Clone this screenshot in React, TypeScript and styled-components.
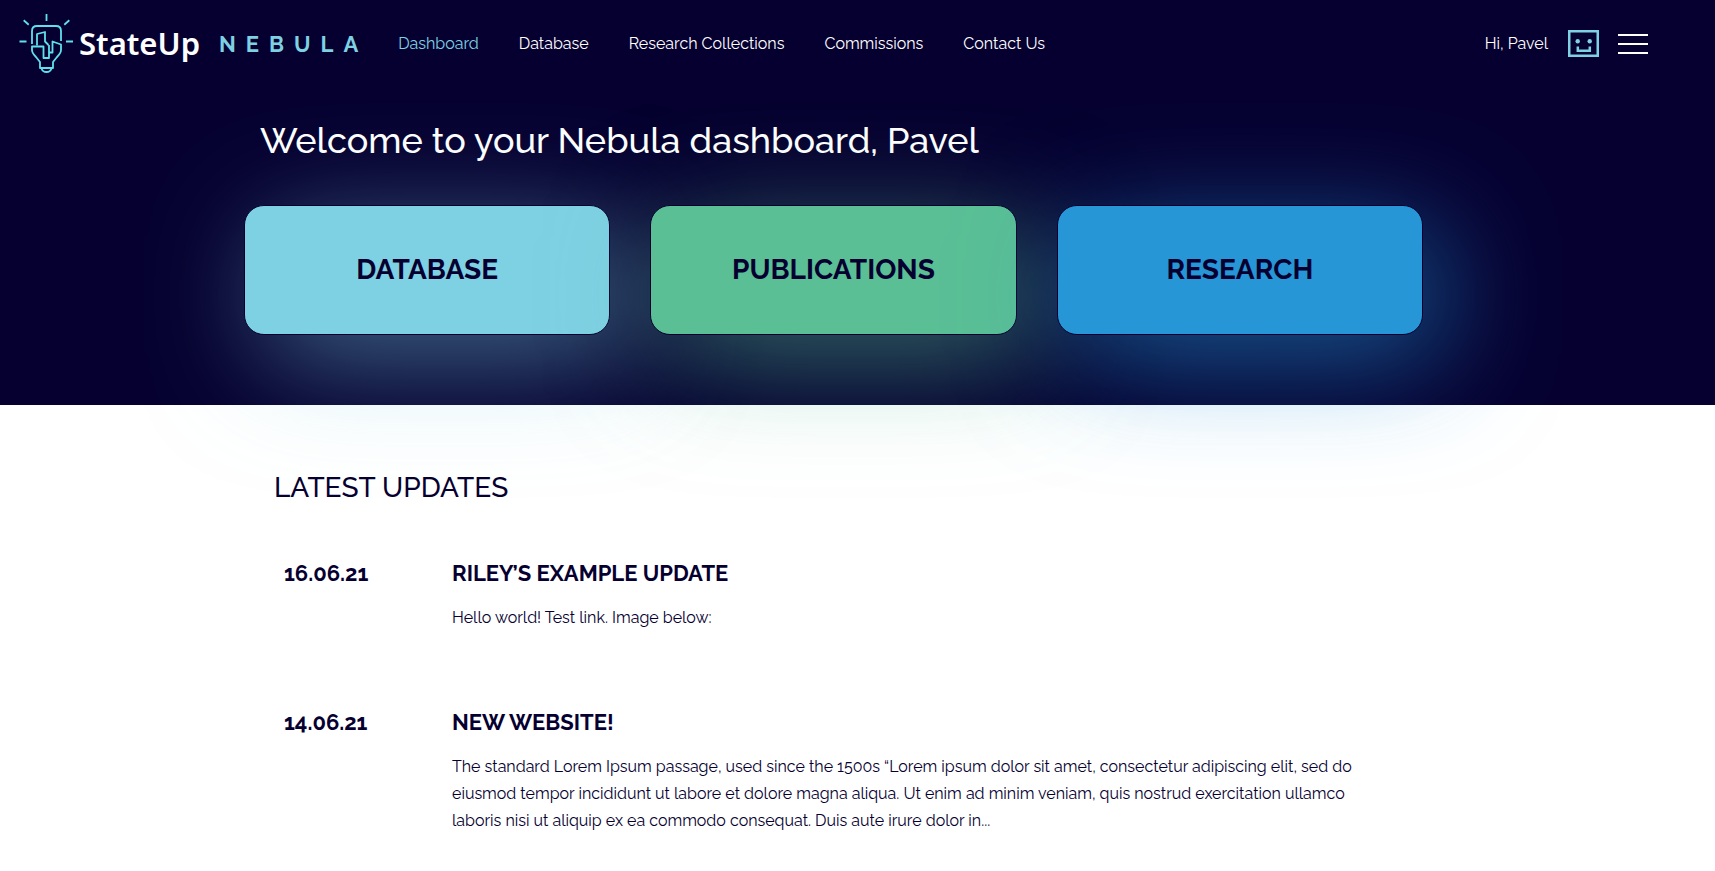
import React from "react";
import styled, { createGlobalStyle } from "styled-components";

const navy = "#060030";
const aqua = "#7ed1e3";

const GlobalStyle = createGlobalStyle`
  *, *::before, *::after { box-sizing: border-box; }
  body {
    margin: 0;
    background: #fff;
    color: ${navy};
    font-family: Raleway, Lato, "Open Sans", sans-serif;
    font-size: 16px;
    line-height: 27px;
  }
  h1, h2, h3, p, ul { margin: 0; padding: 0; }
`;

const Hero = styled.div`
  background: ${navy};
  color: #fff;
  padding-bottom: 70px;
`;

const Header = styled.header`
  display: flex;
  align-items: center;
  height: 88px;
  padding: 0 67px 0 19px;
`;

const Brand = styled.a`
  display: flex;
  align-items: center;
  color: #fff;
  text-decoration: none;
`;

const Wordmark = styled.span`
  margin-left: 5px;
  padding-bottom: 2px;
  font-family: "Noto Sans", "Open Sans", sans-serif;
  font-size: 31px;
  font-weight: 600;
  line-height: 40px;
`;

const Product = styled.span`
  margin-left: 19px;
  color: ${aqua};
  font-size: 22px;
  font-weight: 700;
  letter-spacing: 10px;
`;

const Nav = styled.nav`
  display: flex;
  gap: 40px;
  margin-left: 30px;
  padding-bottom: 2px;
`;

const NavLink = styled.a<{ $active?: boolean }>`
  color: ${(p) => (p.$active ? aqua : "#fff")};
  text-decoration: none;
  white-space: nowrap;
`;

const Account = styled.div`
  display: flex;
  align-items: center;
  gap: 19px;
  margin-left: auto;
`;

const Profile = styled.div`
  display: flex;
  align-items: center;
  gap: 20px;
  padding-bottom: 2px;
`;

const IconButton = styled.button`
  display: flex;
  padding: 0;
  border: 0;
  background: none;
  color: ${aqua};
  cursor: pointer;
`;

const Content = styled.div`
  max-width: 1227px;
  margin: 0 auto;
  padding-right: 48px;
`;

const Welcome = styled.h1`
  padding: 30px 16px 0;
  font-size: 36px;
  font-weight: 500;
  line-height: 44px;
`;

const Cards = styled.div`
  display: grid;
  grid-template-columns: repeat(3, 1fr);
  gap: 40px;
  margin-top: 43px;
`;

const Card = styled.a<{ $fill: string; $glow: string }>`
  display: flex;
  align-items: center;
  justify-content: center;
  height: 130px;
  padding-bottom: 2px;
  border: 1px solid ${navy};
  border-radius: 20px;
  background: ${(p) => p.$fill};
  box-shadow: 20px 25px 115px ${(p) => p.$glow};
  color: ${navy};
  font-size: 28px;
  font-weight: 700;
  text-decoration: none;
`;

const Updates = styled.main`
  position: relative;
  padding: 63px 30px 40px;
`;

const SectionTitle = styled.h2`
  font-size: 28px;
  font-weight: 500;
  line-height: 40px;
`;

const Update = styled.article`
  display: grid;
  grid-template-columns: 168px minmax(0, 910px);
  padding: 50px 0 0 10px;

  & + & { padding-top: 76px; }
`;

const UpdateDate = styled.time`
  font-size: 22px;
  font-weight: 700;
  line-height: 30px;
`;

const UpdateTitle = styled.h3`
  font-size: 22px;
  font-weight: 700;
  line-height: 30px;
`;

const UpdateText = styled.p`
  margin-top: 16px;
`;

const BulbLogo = () => (
  <svg width="55" height="60" viewBox="0 0 55 60" fill="none" stroke="#5fe0ee" strokeWidth="1.800" strokeLinejoin="round" aria-hidden="true">
    <path d="M27.500 0v7M4.700 6.300l5 4.400M50.300 6.300l-5 4.400M.500 27.500h7M47 27.500h7" />
    <path d="M13 30V17q0-5 5-5h19q5 0 5 5v10" />
    <path d="M18 31.500V20l8-2v9.500l3.500 3.500" />
    <path d="M30 31v13h-5.500V32.500H13V36q0 3 4 7l4 5v6h13v-6l4-5q4-4 4-7v-5.500l-8.500-3v11H30" />
    <path d="M22.500 54.500q1 3.500 5 3.500t5-3.500" />
  </svg>
);

const FaceIcon = () => (
  <svg width="31" height="27" viewBox="0 0 31 27" fill="none" stroke="currentColor" strokeWidth="2.500" aria-hidden="true">
    <rect x="1.250" y="1.250" width="28.500" height="24.500" />
    <circle cx="9.700" cy="11.300" r="2.200" fill="currentColor" stroke="none" />
    <circle cx="21.700" cy="11.300" r="2.200" fill="currentColor" stroke="none" />
    <path d="M9.800 16.500v4.200h12v-4.200" />
  </svg>
);

const MenuIcon = () => (
  <svg width="30" height="20" viewBox="0 0 30 20" stroke="#fff" strokeWidth="2" aria-hidden="true">
    <path d="M0 1h30M0 10h30M0 19h30" />
  </svg>
);

const links = ["Dashboard", "Database", "Research Collections", "Commissions", "Contact Us"];

const cards = [
  { label: "DATABASE", fill: "#7ed1e3", glow: "rgba(126, 209, 227, 0.5)" },
  { label: "PUBLICATIONS", fill: "#5abf95", glow: "rgba(90, 191, 149, 0.55)" },
  { label: "RESEARCH", fill: "#2796d6", glow: "rgba(39, 150, 214, 0.6)" },
];

const updates = [
  { date: "16.06.21", iso: "2021-06-16", title: "RILEY’S EXAMPLE UPDATE", text: "Hello world! Test link. Image below:" },
  {
    date: "14.06.21",
    iso: "2021-06-14",
    title: "NEW WEBSITE!",
    text: "The standard Lorem Ipsum passage, used since the 1500s “Lorem ipsum dolor sit amet, consectetur adipiscing elit, sed do eiusmod tempor incididunt ut labore et dolore magna aliqua. Ut enim ad minim veniam, quis nostrud exercitation ullamco laboris nisi ut aliquip ex ea commodo consequat. Duis aute irure dolor in...",
  },
];

export default function App() {
  return (
    <>
      <GlobalStyle />
      <Hero>
        <Header>
          <Brand href="#">
            <BulbLogo />
            <Wordmark>StateUp</Wordmark>
            <Product>NEBULA</Product>
          </Brand>
          <Nav>
            {links.map((label, i) => (
              <NavLink key={label} href="#" $active={i === 0}>{label}</NavLink>
            ))}
          </Nav>
          <Account>
            <Profile>
              <span>Hi, Pavel</span>
              <IconButton aria-label="Profile"><FaceIcon /></IconButton>
            </Profile>
            <IconButton aria-label="Menu"><MenuIcon /></IconButton>
          </Account>
        </Header>
        <Content>
          <Welcome>Welcome to your Nebula dashboard, Pavel</Welcome>
          <Cards>
            {cards.map((c) => (
              <Card key={c.label} href="#" $fill={c.fill} $glow={c.glow}>{c.label}</Card>
            ))}
          </Cards>
        </Content>
      </Hero>
      <Content>
        <Updates>
          <SectionTitle>LATEST UPDATES</SectionTitle>
          {updates.map((u) => (
            <Update key={u.iso}>
              <UpdateDate dateTime={u.iso}>{u.date}</UpdateDate>
              <div>
                <UpdateTitle>{u.title}</UpdateTitle>
                <UpdateText>{u.text}</UpdateText>
              </div>
            </Update>
          ))}
        </Updates>
      </Content>
    </>
  );
}
